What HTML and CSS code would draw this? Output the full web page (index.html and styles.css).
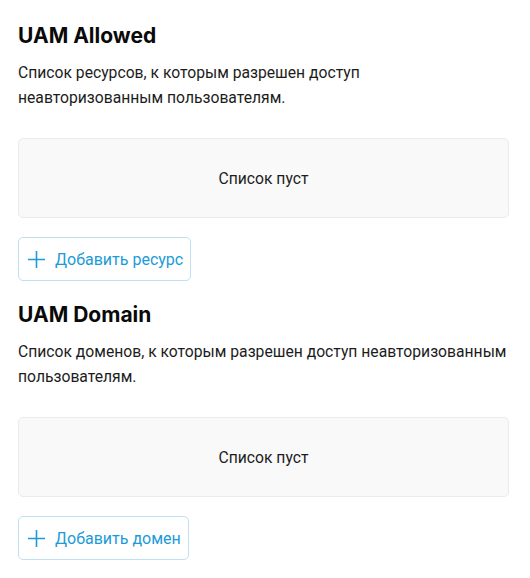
FILE: index.html
```html
<!DOCTYPE html>
<html lang="ru">
<head>
<meta charset="utf-8">
<link rel="stylesheet" href="styles.css">
</head>
<body>
<div class="page">
  <section class="section">
    <h2 class="title">UAM Allowed</h2>
    <p class="desc">Список ресурсов, к которым разрешен доступ<br>неавторизованным пользователям.</p>
    <div class="empty">Список пуст</div>
    <button class="add-btn" type="button">
      <svg class="plus" width="17" height="17" viewBox="0 0 17 17"><path d="M8.5 0V17M0 8.5H17" stroke="currentColor" stroke-width="1.6" fill="none"/></svg>
      <span>Добавить ресурс</span>
    </button>
  </section>
  <section class="section">
    <h2 class="title">UAM Domain</h2>
    <p class="desc">Список доменов, к которым разрешен доступ неавторизованным пользователям.</p>
    <div class="empty">Список пуст</div>
    <button class="add-btn" type="button">
      <svg class="plus" width="17" height="17" viewBox="0 0 17 17"><path d="M8.5 0V17M0 8.5H17" stroke="currentColor" stroke-width="1.6" fill="none"/></svg>
      <span>Добавить домен</span>
    </button>
  </section>
</div>
</body>
</html>
```
FILE: styles.css
```css
html, body {
  margin: 0;
  padding: 0;
  background: #ffffff;
}
body {
  font-family: Roboto, "Noto Sans", sans-serif;
  color: #1c1c1c;
}
.page {
  width: 491px;
  padding: 22px 0 0 18px;
  display: flex;
  flex-direction: column;
  gap: 20px;
}
.section {
  display: flex;
  flex-direction: column;
  align-items: flex-start;
}
.title {
  margin: 0;
  font-family: Inter, Roboto, sans-serif;
  font-size: 21px;
  line-height: 28px;
  font-weight: 700;
  color: #0a0a0a;
}
.desc {
  margin: 10px 0 0;
  font-size: 15.7px;
  line-height: 25px;
  color: #1c1c1c;
}
.empty {
  box-sizing: border-box;
  align-self: stretch;
  margin-top: 28px;
  height: 80px;
  display: flex;
  align-items: center;
  justify-content: center;
  background: #f9f9f9;
  border: 1px solid #e9ecef;
  border-radius: 5px;
  font-size: 15.7px;
  color: #1c1c1c;
}
.add-btn {
  box-sizing: border-box;
  margin-top: 19px;
  height: 44px;
  display: flex;
  align-items: center;
  gap: 10px;
  padding: 0 7px 0 9px;
  background: #fff;
  border: 1px solid #bfe0f3;
  border-radius: 5px;
  font-family: Roboto, "Noto Sans", sans-serif;
  font-size: 16px;
  color: #1b9bd8;
  cursor: pointer;
}
.plus {
  display: block;
  flex: none;
}
```
